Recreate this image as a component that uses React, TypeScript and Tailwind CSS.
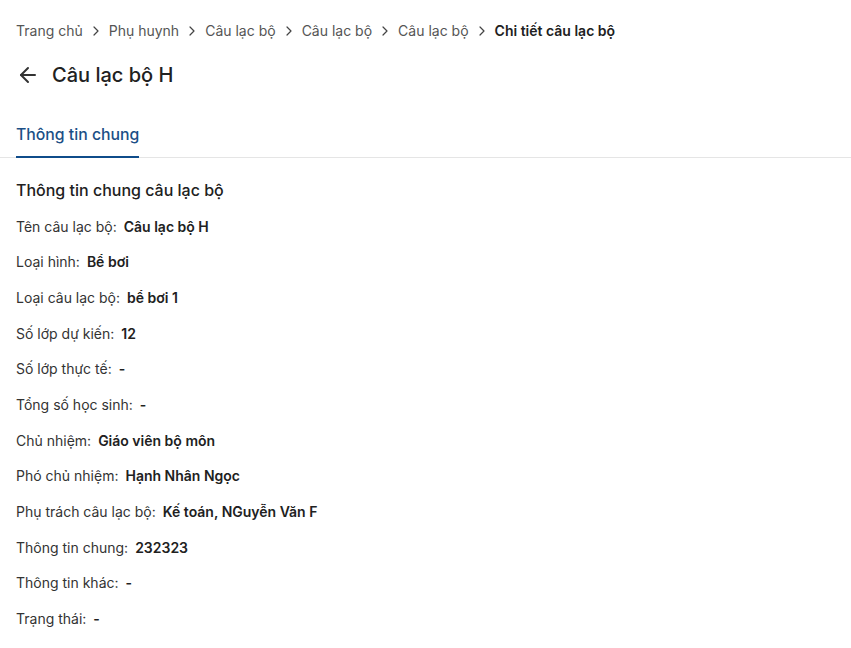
import { ArrowLeft, ChevronRight } from "lucide-react";

const crumbs = ["Trang chủ", "Phụ huynh", "Câu lạc bộ", "Câu lạc bộ", "Câu lạc bộ"];

const rows: [string, string][] = [
  ["Tên câu lạc bộ:", "Câu lạc bộ H"],
  ["Loại hình:", "Bể bơi"],
  ["Loại câu lạc bộ:", "bể bơi 1"],
  ["Số lớp dự kiến:", "12"],
  ["Số lớp thực tế:", "-"],
  ["Tổng số học sinh:", "-"],
  ["Chủ nhiệm:", "Giáo viên bộ môn"],
  ["Phó chủ nhiệm:", "Hạnh Nhân Ngọc"],
  ["Phụ trách câu lạc bộ:", "Kế toán, NGuyễn Văn F"],
  ["Thông tin chung:", "232323"],
  ["Thông tin khác:", "-"],
  ["Trạng thái:", "-"],
];

export default function App() {
  return (
    <div className="min-h-screen bg-white font-['Inter',sans-serif] text-[#212121]">
      {/* breadcrumb */}
      <div className="flex items-center px-4 pt-[21px] text-sm text-[#555]">
        {crumbs.map((c, i) => (
          <div key={i} className="flex items-center">
            <span>{c}</span>
            <ChevronRight className="mx-[5px] h-4 w-4 text-[#444]" strokeWidth={1.8} />
          </div>
        ))}
        <span className="font-semibold text-[#212121]">Chi tiết câu lạc bộ</span>
      </div>

      {/* title */}
      <div className="flex items-center gap-3 px-4 pt-[20px]">
        <ArrowLeft className="h-6 w-6 text-[#333]" strokeWidth={2} />
        <h1 className="text-xl font-medium text-[#212121]">Câu lạc bộ H</h1>
      </div>

      {/* tabs */}
      <div className="mt-[33px] flex border-b border-[#e5e5e5] pl-4">
        <div className="-mb-px border-b-2 border-[#0f4c8a] pt-px pb-[9px] text-[15.8px] font-medium text-[#1b4f86]">
          Thông tin chung
        </div>
      </div>

      {/* content */}
      <div className="px-4 pt-[20px]">
        <h2 className="text-base font-medium text-[#212121]">Thông tin chung câu lạc bộ</h2>
        <div className="mt-[7px] flex flex-col">
          {rows.map(([label, value], i) => (
            <div key={i} className="flex h-[35.7px] items-center text-sm">
              <span className="text-[#333]">{label}</span>
              <span className="ml-[7px] font-semibold text-[#212121]">{value}</span>
            </div>
          ))}
        </div>
      </div>
    </div>
  );
}
